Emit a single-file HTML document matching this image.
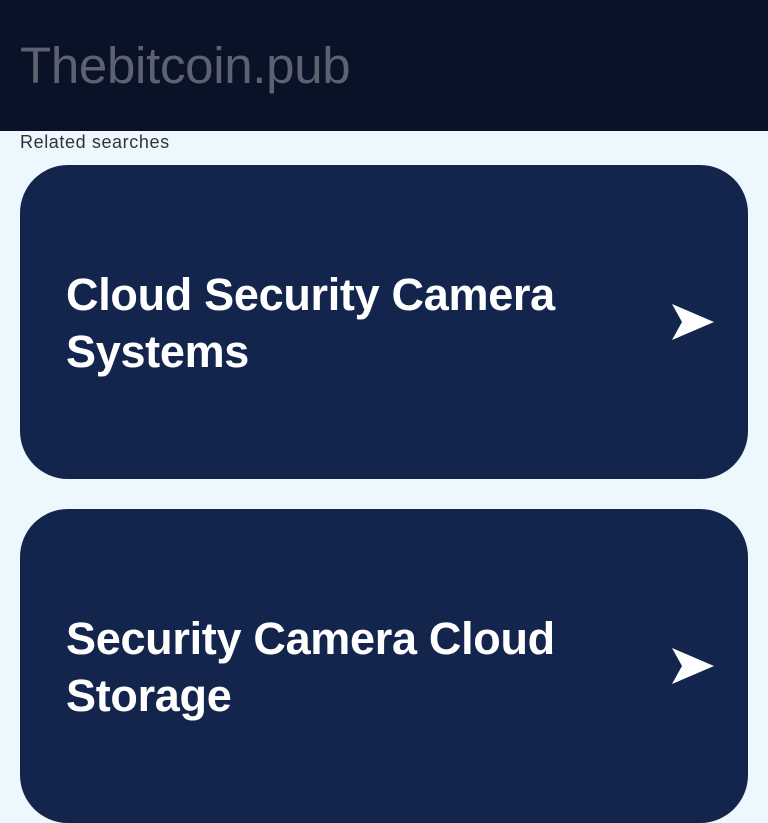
<!DOCTYPE html>
<html><head><style>
*{margin:0;padding:0;box-sizing:border-box}
body{width:768px;height:806px;overflow:hidden;background:#edf7fe;font-family:"Liberation Sans",sans-serif}
.h{height:131px;background:#0a1228;position:relative}
.h span{position:absolute;left:20px;top:36px;font-size:51px;font-weight:100;color:#5c6270;letter-spacing:-0.3px}
.rs{position:absolute;left:20px;top:132px;font-size:18px;color:#333;letter-spacing:0.6px}
.c{position:absolute;left:20px;width:728px;height:314px;background:#13254d;border-radius:48px}
.c p{position:absolute;left:46px;top:101px;width:560px;color:#fff;font-weight:bold;font-size:45px;line-height:57px;letter-spacing:-0.3px}
.c svg{position:absolute;left:652px;top:139px}
</style></head><body>
<div class="h"><span>Thebitcoin.pub</span></div>
<div class="rs">Related searches</div>
<div class="c" style="top:165px"><p>Cloud Security Camera Systems</p><svg width="44" height="38"><path d="M0 0L42 18L0 36L10 18Z" fill="#fff"/></svg></div>
<div class="c" style="top:509px"><p>Security Camera Cloud Storage</p><svg width="44" height="38"><path d="M0 0L42 18L0 36L10 18Z" fill="#fff"/></svg></div>
</body></html>
